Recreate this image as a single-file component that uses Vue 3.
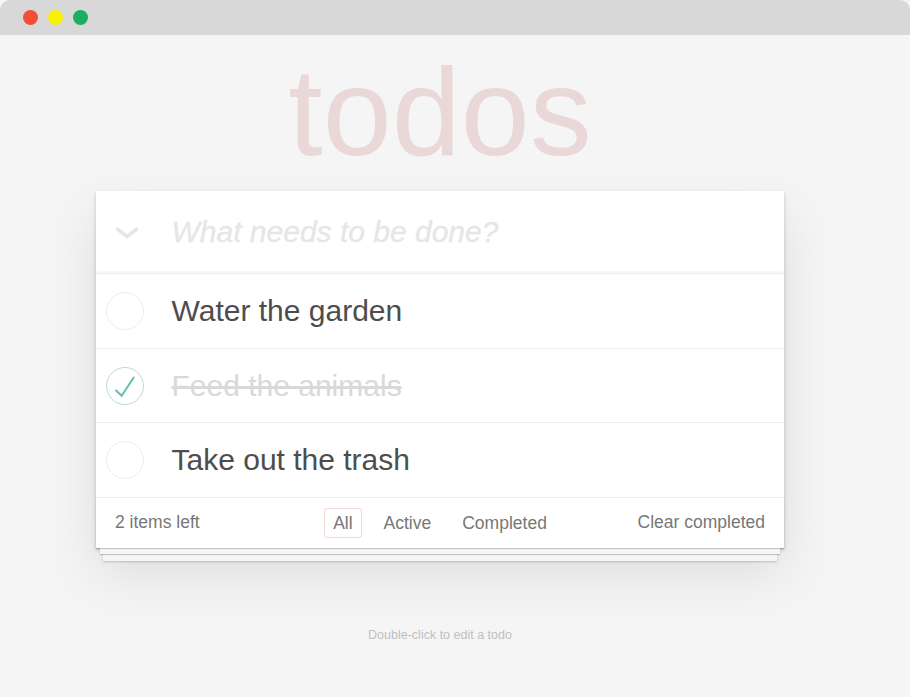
<template>
<div class="window">
    <div class="title-bar">
        <span class="dot red"></span>
        <span class="dot yellow"></span>
        <span class="dot green"></span>
    </div>

    <div class="page">
        <h1>todos</h1>

        <section class="todoapp">
            <header class="new-todo">
                <svg class="toggle-all" width="24" height="14" viewBox="0 0 24 14">
                    <path d="M1.5 2.5 L12 10.5 L22.5 2.5" fill="none" stroke="#e6e6e6" stroke-width="3.6" />
                </svg>
                <span class="placeholder">What needs to be done?</span>
            </header>

            <ul class="todo-list">
                <li v-for="todo in todos" :key="todo.id" :class="{ completed: todo.done }">
                    <svg class="toggle" width="40" height="40" viewBox="0 0 40 40">
                        <circle cx="20" cy="20" r="18.5" fill="none" :stroke="todo.done ? '#bddad5' : '#ededed'" stroke-width="1" />
                        <path v-if="todo.done" d="M10.5 24 L16.7 29.7 L29 11" fill="none" stroke="#5dc2af" stroke-width="2" />
                    </svg>
                    <span class="label">{{ todo.title }}</span>
                </li>
            </ul>

            <footer class="footer">
                <span class="count">{{ itemsLeft }} items left</span>
                <ul class="filters">
                    <li v-for="f in filters" :key="f" :class="{ selected: f === 'All' }">{{ f }}</li>
                </ul>
                <span class="clear">Clear completed</span>
            </footer>
        </section>

        <p class="info">Double-click to edit a todo</p>
    </div>
</div>
</template>

<script setup>
import { computed } from 'vue'

const todos = [
    { id: 1, title: 'Water the garden', done: false },
    { id: 2, title: 'Feed the animals', done: true },
    { id: 3, title: 'Take out the trash', done: false }
]
const filters = ['All', 'Active', 'Completed']
const itemsLeft = computed(() => todos.filter(t => !t.done).length)
</script>

<style>
html, body {
    margin: 0;
    background: #fff;
}
</style>

<style scoped>
.window {
    width: 910px;
    height: 697px;
    overflow: hidden;
    background: #f5f5f5;
    font-family: "Liberation Sans", Arial, sans-serif;
    color: #4d4d4d;
}

.title-bar {
    height: 35px;
    background: #d8d8d8;
    border-radius: 10px 10px 0 0;
    display: flex;
    align-items: center;
    gap: 10px;
    padding-left: 23px;
}

.dot {
    width: 15px;
    height: 15px;
    border-radius: 50%;
}
.red { background: #f44e38; }
.yellow { background: #f5f100; }
.green { background: #18b05f; }

.page {
    width: 688px;
    margin-left: 96px;
}

h1 {
    margin: 0;
    height: 156px;
    text-align: center;
    font-size: 124px;
    line-height: 154px;
    font-weight: 400;
    color: rgba(175, 47, 47, 0.15);
}

.todoapp {
    background: #fff;
    box-shadow: 0 2px 4px 0 rgba(0, 0, 0, 0.2), 0 25px 50px 0 rgba(0, 0, 0, 0.1);
}

.new-todo {
    height: 82px;
    display: flex;
    align-items: center;
    box-shadow: inset 0 -2px 1px rgba(0, 0, 0, 0.03);
    border-bottom: 1px solid #ededed;
    padding-left: 19px;
}

.toggle-all {
    margin-right: 32.5px;
    margin-top: 2px;
}

.placeholder {
    font-size: 30px;
    font-style: italic;
    color: #e6e6e6;
    -webkit-text-stroke: 0.3px #e6e6e6;
}

.todo-list {
    list-style: none;
    margin: 0;
    padding: 0;
}

.todo-list li {
    height: 73.17px;
    display: flex;
    align-items: center;
    border-bottom: 1px solid #ededed;
    padding: 0.5px 0 0 9px;
}

.toggle {
    flex: none;
    margin-right: 26.5px;
}

.label {
    font-size: 30px;
    line-height: 36px;
}

.completed .label {
    color: #d9d9d9;
    text-decoration: line-through;
}

.footer {
    height: 50px;
    display: grid;
    grid-template-columns: 1fr auto 1fr;
    align-items: center;
    padding: 0 19px;
    font-size: 17.5px;
    color: #777;
    position: relative;
}

.footer::before {
    content: '';
    position: absolute;
    left: 0;
    right: 0;
    bottom: 0;
    height: 50px;
    box-shadow: 0 1px 1px rgba(0, 0, 0, 0.2),
        0 10px 0 -4px #f6f6f6,
        0 11px 1px -4px rgba(0, 0, 0, 0.2),
        0 20px 0 -7px #f6f6f6,
        0 21px 2px -7px rgba(0, 0, 0, 0.2);
}

.filters {
    list-style: none;
    margin: 0;
    padding: 0;
    display: flex;
    gap: 13px;
}

.filters li {
    padding: 4px 8px;
    line-height: 20px;
    border: 1px solid transparent;
    border-radius: 3px;
}

.filters li.selected {
    border-color: rgba(175, 47, 47, 0.2);
}

.clear {
    justify-self: end;
}

.info {
    margin: 80px 0 0;
    text-align: center;
    font-size: 12.5px;
    color: #bfbfbf;
}
</style>
